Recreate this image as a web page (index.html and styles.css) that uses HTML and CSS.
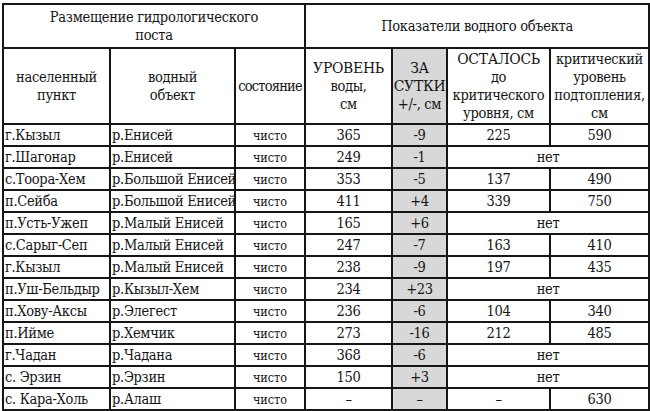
FILE: index.html
```html
<!DOCTYPE html>
<html lang="ru">
<head>
<meta charset="utf-8">
<title>Показатели водного объекта</title>
<link rel="stylesheet" href="styles.css">
</head>
<body>
<table class="grid">
  <colgroup>
    <col class="c1"><col class="c2"><col class="c3"><col class="c4"><col class="c5"><col class="c6"><col class="c7">
  </colgroup>
  <thead>
    <tr class="h1">
      <th colspan="3">Размещение гидрологического<br>поста</th>
      <th colspan="4">Показатели водного объекта</th>
    </tr>
    <tr class="h2">
      <th>населенный<br>пункт</th>
      <th>водный<br>объект</th>
      <th class="narrow">состояние</th>
      <th><span class="caps">УРОВЕНЬ</span><br>воды,<br>см</th>
      <th class="gray"><span class="caps">ЗА<br>СУТКИ</span><br>+/-, см</th>
      <th><span class="caps">ОСТАЛОСЬ</span><br>до<br>критического<br>уровня, см</th>
      <th>критический<br>уровень<br>подтопления,<br>см</th>
    </tr>
  </thead>
  <tbody>
    <tr><td class="l">г.Кызыл</td><td class="l">р.Енисей</td><td class="st">чисто</td><td>365</td><td class="gray">-9</td><td>225</td><td>590</td></tr>
    <tr><td class="l">г.Шагонар</td><td class="l">р.Енисей</td><td class="st">чисто</td><td>249</td><td class="gray">-1</td><td colspan="2">нет</td></tr>
    <tr><td class="l">с.Тоора-Хем</td><td class="l">р.Большой Енисей</td><td class="st">чисто</td><td>353</td><td class="gray">-5</td><td>137</td><td>490</td></tr>
    <tr><td class="l">п.Сейба</td><td class="l">р.Большой Енисей</td><td class="st">чисто</td><td>411</td><td class="gray">+4</td><td>339</td><td>750</td></tr>
    <tr><td class="l">п.Усть-Ужеп</td><td class="l">р.Малый Енисей</td><td class="st">чисто</td><td>165</td><td class="gray">+6</td><td colspan="2">нет</td></tr>
    <tr><td class="l">с.Сарыг-Сеп</td><td class="l">р.Малый Енисей</td><td class="st">чисто</td><td>247</td><td class="gray">-7</td><td>163</td><td>410</td></tr>
    <tr><td class="l">г.Кызыл</td><td class="l">р.Малый Енисей</td><td class="st">чисто</td><td>238</td><td class="gray">-9</td><td>197</td><td>435</td></tr>
    <tr><td class="l">п.Уш-Бельдыр</td><td class="l">р.Кызыл-Хем</td><td class="st">чисто</td><td>234</td><td class="gray">+23</td><td colspan="2">нет</td></tr>
    <tr><td class="l">п.Хову-Аксы</td><td class="l">р.Элегест</td><td class="st">чисто</td><td>236</td><td class="gray">-6</td><td>104</td><td>340</td></tr>
    <tr><td class="l">п.Ийме</td><td class="l">р.Хемчик</td><td class="st">чисто</td><td>273</td><td class="gray">-16</td><td>212</td><td>485</td></tr>
    <tr><td class="l">г.Чадан</td><td class="l">р.Чадана</td><td class="st">чисто</td><td>368</td><td class="gray">-6</td><td colspan="2">нет</td></tr>
    <tr><td class="l">с. Эрзин</td><td class="l">р.Эрзин</td><td class="st">чисто</td><td>150</td><td class="gray">+3</td><td colspan="2">нет</td></tr>
    <tr><td class="l">с. Кара-Холь</td><td class="l">р.Алаш</td><td class="st">чисто</td><td>–</td><td class="gray">–</td><td>–</td><td>630</td></tr>
  </tbody>
</table>
</body>
</html>
```

FILE: styles.css
```css
html, body {
  margin: 0;
  padding: 0;
  background: #ffffff;
}

body {
  font-family: "DejaVu Serif", "Liberation Serif", serif;
  font-stretch: condensed;
  color: #151515;
}

.grid {
  margin: 3px 0 0 2px;
  width: 646px;
  border-collapse: collapse;
  table-layout: fixed;
  font-size: 14.5px;
  letter-spacing: -0.3px;
}

.c1 { width: 107px; }
.c2 { width: 125px; }
.c3 { width: 70px; }
.c4 { width: 87px; }
.c5 { width: 55px; }
.c6 { width: 103px; }
.c7 { width: 99px; }

.grid th,
.grid td {
  border: 2px solid #161616;
  padding: 0;
  text-align: center;
  vertical-align: middle;
  overflow: hidden;
  white-space: nowrap;
}

.grid th {
  font-weight: normal;
  line-height: 18px;
}

.h1 th { height: 42px; }
.h2 th { height: 74px; }

.caps {
  font-size: 15.5px;
}

.grid td {
  height: 20px;
  line-height: 19px;
}

.grid td.l {
  text-align: left;
  padding-left: 1px;
}

.grid td.st {
  font-size: 12.5px;
  letter-spacing: 0;
}

.narrow {
  letter-spacing: -0.8px;
}

.gray {
  background: #d8d8d8;
}
```
